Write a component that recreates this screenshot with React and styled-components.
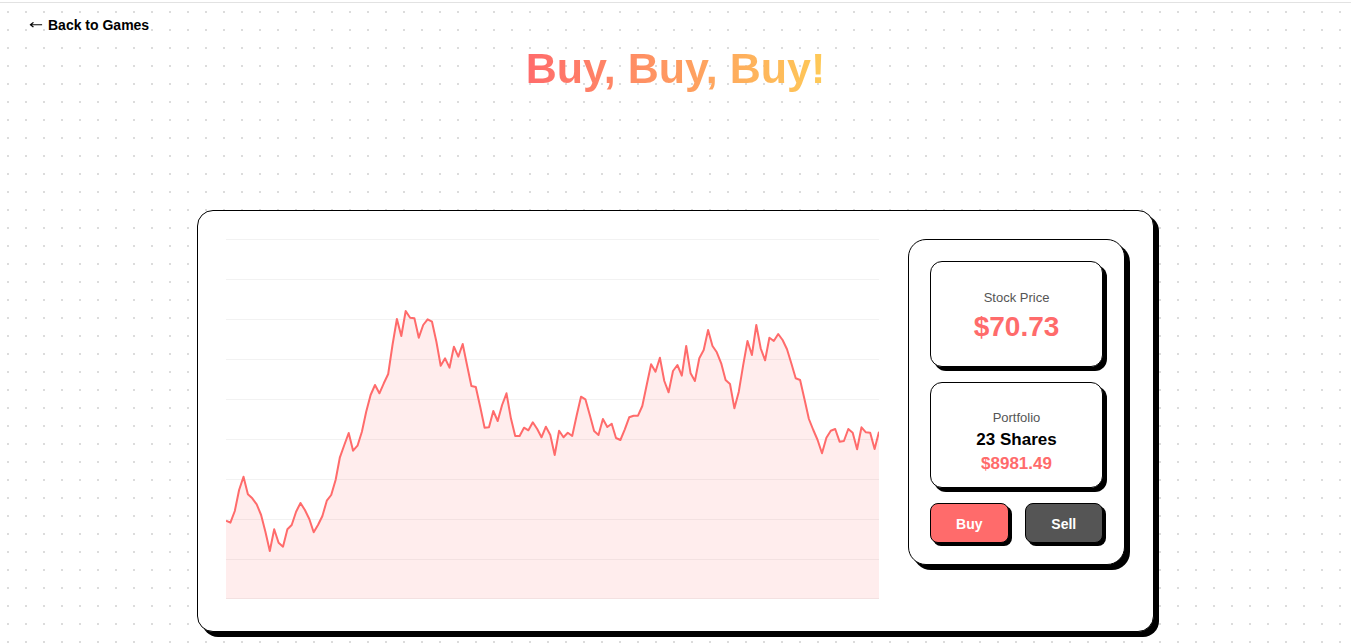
import React from 'react'
import styled, { createGlobalStyle } from 'styled-components'

const GlobalStyle = createGlobalStyle`
    * { box-sizing: border-box; }
    body {
        margin: 0;
        font-family: "Liberation Sans", Arial, sans-serif;
        background-color: #fff;
        background-image: radial-gradient(circle, #dcdcdc 1px, transparent 1.2px);
        background-size: 18px 18px;
        background-position: -1px 3px;
    }
`
const Page = styled.div`
    width: calc(100% - 3px);
    min-height: 644px;
    margin-top: 2px;
    border-top: 1px solid #e2e2e2;
    padding: 12px 0 0 29px;
`
const BackLink = styled.a`
    display: inline-flex;
    align-items: center;
    gap: 4px;
    font-size: 14px;
    font-weight: 700;
    color: #000;
    text-decoration: none;
    cursor: pointer;
`
const Arrow = styled.span`
    display: inline-block;
    width: 15px;
    font-family: "DejaVu Sans", sans-serif;
    font-weight: 400;
    font-size: 13px;
    transform: scaleX(1.3);
    transform-origin: left center;
`
const Title = styled.h1`
    margin: 11px 0 0 -29px;
    text-align: center;
    font-size: 43px;
    line-height: 48px;
    font-weight: 700;
    span {
        background: linear-gradient(90deg, #ff6b6b, #feca57);
        -webkit-background-clip: text;
        background-clip: text;
        color: transparent;
    }
`
const Card = styled.div`
    width: 957px;
    margin: 118px auto 0;
    position: relative;
    left: -14.5px;
    display: grid;
    grid-template-columns: 653px 217px;
    gap: 29px;
    padding: 28px;
    background: #fff;
    border: 1px solid #000;
    border-radius: 16px;
    box-shadow: 5px 5px 0 #000;
`
const ChartArea = styled.div`
    height: 364px;
    svg { display: block; }
`
const Panel = styled.div`
    align-self: start;
    display: flex;
    flex-direction: column;
    gap: 15px;
    padding: 21px;
    background: #fff;
    border: 1px solid #000;
    border-radius: 18px;
    box-shadow: 5px 5px 0 #000;
`
const InfoBox = styled.div`
    height: 106px;
    display: flex;
    flex-direction: column;
    align-items: center;
    justify-content: center;
    padding-top: ${p => p.$offset || 0}px;
    border: 1px solid #000;
    border-radius: 12px;
    box-shadow: 4px 4px 0 #000;
    background: #fff;
`
const Label = styled.div`
    font-size: 13px;
    color: #555;
    margin-bottom: ${p => p.$gap || 5}px;
`
const Price = styled.div`
    font-size: 28px;
    font-weight: 700;
    color: #ff6b6b;
`
const Shares = styled.div`
    font-size: 17px;
    font-weight: 700;
    color: #000;
    margin-bottom: 4px;
`
const Worth = styled.div`
    font-size: 17px;
    font-weight: 700;
    color: #ff6b6b;
`
const Buttons = styled.div`
    display: grid;
    grid-template-columns: 1fr 1fr;
    gap: 16px;
`
const Button = styled.button`
    height: 40px;
    padding-top: 2px;
    border: 1px solid #000;
    border-radius: 8px;
    box-shadow: 3px 3px 0 #000;
    background: ${p => p.$color};
    color: #fff;
    font-family: inherit;
    font-size: 14px;
    font-weight: 700;
    cursor: pointer;
`

// price history, in chart pixels from the top
const history = [
    281.7, 283.7, 272, 251, 237.7, 255.3, 259.3, 265.3, 276, 292.7, 312, 290.3, 303.7, 307.7, 290.3, 286, 272.7, 264, 271, 280,
    293.3, 286, 277, 261.7, 256, 241, 218.3, 206, 194, 211.7, 206.7, 192.7, 172.7, 156, 146, 154.3, 144.3, 135, 106, 80,
    97, 72, 78.7, 79.3, 98.7, 86, 80.3, 82.7, 102.7, 126.7, 119.3,
    128.7, 107.7, 117.7, 105, 126, 147, 148, 167.7, 188.7, 188.3, 172, 182, 166, 154.3, 179.3, 197, 197, 188.7, 191.3, 183.3,
    190, 198.3, 187.7, 196, 216, 191.7, 198.3, 193.7, 197, 176.7, 157.7, 160.3, 176, 192, 196, 180, 188, 184.7, 199, 201,
    190.3, 178.3, 176.7, 176.7, 167, 146, 125.3, 132.7, 118.7,
    142, 153.3, 132, 126, 136.7, 107, 134.3, 142, 119.3, 111, 91, 107, 113.3, 124.3, 141, 145, 169.3, 152.7, 126.7, 102,
    116, 86, 109.3, 121.3, 98.7, 102, 95, 101, 110.3, 124.3, 139.3, 141, 160.3, 180, 191, 201, 214.3, 198.7, 191.7, 190,
    202.7, 202, 190, 193.7, 210.3, 188.3, 193.3, 193.7, 210, 192.7,
]

function PriceChart({ data, width = 653, height = 360 }) {
    const step = width / (data.length - 1)
    const pts = data.map((y, i) => `${(i * step).toFixed(1)},${y}`)
    const line = 'M' + pts.join(' L')
    const area = `${line} L${width},${height} L0,${height} Z`
    const grid = []
    for (let y = 0; y <= height; y += 40) grid.push(Math.min(y, height - 1) + 0.5)
    return (
        <svg width={width} height={height} viewBox={`0 0 ${width} ${height}`}>
            {grid.map(y => <line key={y} x1="0" x2={width} y1={y} y2={y} stroke="#f2f2f2" strokeWidth="1" />)}
            <path d={area} fill="rgba(255,107,107,0.12)" />
            <path d={line} fill="none" stroke="#ff6b6b" strokeWidth="2" strokeLinejoin="round" />
        </svg>
    )
}

export default function App() {
    return (
        <Page>
            <GlobalStyle />
            <BackLink><Arrow>←</Arrow>Back to Games</BackLink>
            <Title><span>Buy, Buy, Buy!</span></Title>
            <Card>
                <ChartArea>
                    <PriceChart data={history} />
                </ChartArea>
                <Panel>
                    <InfoBox $offset={4}>
                        <Label $gap={6}>Stock Price</Label>
                        <Price>$70.73</Price>
                    </InfoBox>
                    <InfoBox $offset={14}>
                        <Label>Portfolio</Label>
                        <Shares>23 Shares</Shares>
                        <Worth>$8981.49</Worth>
                    </InfoBox>
                    <Buttons>
                        <Button $color="#ff6b6b">Buy</Button>
                        <Button $color="#555">Sell</Button>
                    </Buttons>
                </Panel>
            </Card>
        </Page>
    )
}
